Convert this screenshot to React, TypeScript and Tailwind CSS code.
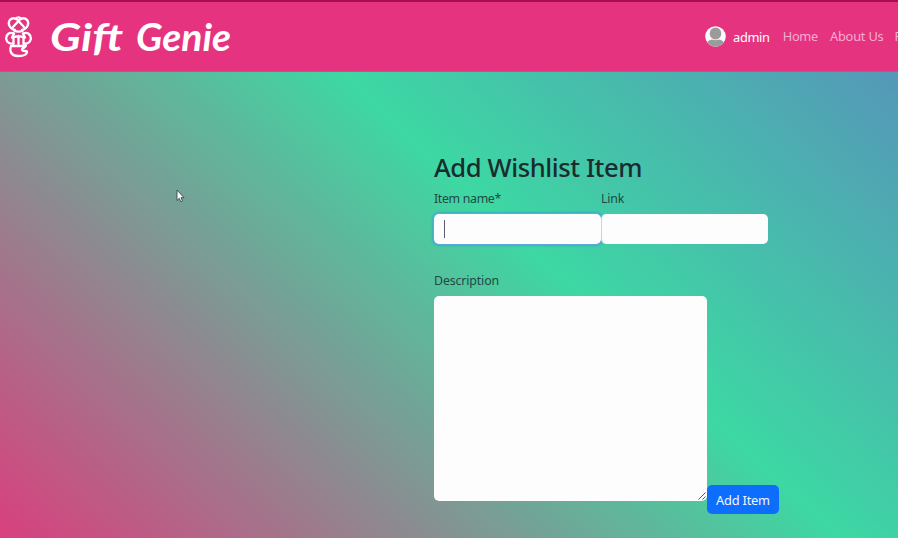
function GenieLogo() {
  return (
    <svg className="h-[42px] w-7 shrink-0" viewBox="0 0 28 42" fill="none" stroke="#fff" strokeWidth="2.3" strokeLinecap="round" strokeLinejoin="round">
      <path d="M10 14C5 13 2.500 8 4.500 4.500c2-3 5.500-3 9 0 3.500-3 7-3 9 0 2 3.500-.5 8.500-5.500 9.500" />
      <path d="M13.500 5L8 11M13.500 5l5.500 6M9 14.500c3 1.500 6 1.500 9 0M11 2.500c1-1.500 4-1.500 5 0" />
      <path d="M9 17.500C4 15.500.8 19 1.200 23c.5 3 3.300 5 6.800 4.500M18 17.500c5-2 8.200 1.500 7.800 5.500-.5 3-3.300 5-6.800 4.500" />
      <path d="M9 17.500l-2 4M18 17.500l2 4M8.500 22v6M13.500 20v8M18.500 22v6M9 21c3-1 6-1 9 0" />
      <path d="M6 30c-2 6 1 10 7 10 5 0 9-1 9-4 0-2-4 0-5-2-1-2 4-2 4-4.500M7 30h12" />
    </svg>
  );
}

function Avatar() {
  return (
    <svg className="size-[21px] shrink-0" viewBox="0 0 21 21">
      <defs>
        <clipPath id="avatar-circle"><circle cx="10.500" cy="10.500" r="10.300" /></clipPath>
      </defs>
      <g clipPath="url(#avatar-circle)">
        <rect width="21" height="21" fill="#fbfafb" />
        <ellipse cx="10.500" cy="7.500" rx="5.800" ry="6" fill="#9b9b9b" />
        <path d="M1 21c0-5 3-7 6-7.500 2 1 5 1 7 0 3 .5 6 2.500 6 7.500z" fill="#9b9b9b" />
      </g>
    </svg>
  );
}

function Pointer() {
  return (
    <svg className="pointer-events-none absolute left-[176px] top-[189px] h-[14px] w-[9px]" viewBox="0 0 9 14">
      <path d="M1 1v10.500l2.300-2.200 1.500 3.500 1.700-.8-1.500-3.300H8z" fill="#fff" stroke="#37474a" strokeWidth=".9" />
    </svg>
  );
}

export default function App() {
  return (
    <div className="relative flex h-[538px] w-[898px] flex-col overflow-hidden bg-[linear-gradient(43deg,#d9407e_0%,#3dd8a3_57%,#5597b8_95%)] font-['Noto_Sans',sans-serif] text-[12.8px] text-[#1f4a44]">
      <header className="flex h-[72px] shrink-0 items-center border-b border-[#a4667f] border-t-2 border-t-[#a80f50] bg-[#e6337f] text-white">
        <div className="flex items-center pl-[5px]">
          <GenieLogo />
          <svg className="ml-[14px] h-[60px] w-[190px]" viewBox="0 0 190 60" fill="#fff">
            <g fontFamily="Lato, sans-serif" fontStyle="italic" fontWeight="700" fontSize="38">
              <text x="3" y="44" textLength="73" lengthAdjust="spacingAndGlyphs">Gift</text>
              <text x="89" y="44" textLength="95" lengthAdjust="spacingAndGlyphs">Genie</text>
            </g>
          </svg>
        </div>
        <nav className="ml-auto flex w-[193px] items-center overflow-hidden whitespace-nowrap text-[#f6add0]">
          <Avatar />
          <span className="ml-[7px] mt-[2px] tracking-[-0.3px] text-white">admin</span>
          <span className="ml-[13px] mt-px tracking-[-0.3px]">Home</span>
          <span className="ml-3 mt-px tracking-[-0.2px]">About Us</span>
          <span className="ml-[11px] mt-px">F</span>
        </nav>
      </header>
      <main className="ml-[434px] flex flex-col items-start pt-[78px]">
        <h2 className="h-[35px] whitespace-nowrap text-[25.6px] font-medium leading-[35px] tracking-[-0.42px] text-[#1b2c30]">Add Wishlist Item</h2>
        <div className="mt-1 flex">
          <label className="flex w-[167px] flex-col">
            <span className="h-[25px] text-[12.4px] leading-[20px] tracking-[-0.35px]">Item name*</span>
            <span className="flex h-[30px] items-center rounded-[5px] bg-[#fdfdfe] pl-[10px] shadow-[0_0_0_1px_#5aaed5,0_0_2px_2px_#3aadc5]">
              <span className="h-[18px] w-px bg-[#5b5b70]" />
            </span>
          </label>
          <label className="flex w-[167px] flex-col">
            <span className="h-[25px] text-[12.4px] leading-[20px] tracking-[-0.2px]">Link</span>
            <span className="z-10 h-[30px] rounded-[5px] border-l border-[#c2d4f6] bg-[#fdfdfe]" />
          </label>
        </div>
        <span className="mt-[27px] h-[25px] text-[12.4px] leading-[20px] tracking-[-0.15px]">Description</span>
        <div className="flex items-end">
          <div className="flex h-[205px] w-[273px] items-end justify-end rounded-[5px] bg-[#fdfdfd] p-px">
            <svg className="size-[8px]" viewBox="0 0 8 8" stroke="#555" strokeWidth="1">
              <path d="M0.500 7.500l7-7M4.500 7.500l3-3" />
            </svg>
          </div>
          <button className="-mb-[13px] h-[29px] w-[72px] whitespace-nowrap rounded-[5px] bg-[#0d6efd] pt-[2px] tracking-[-0.2px] text-[#f2f7ff]">Add Item</button>
        </div>
      </main>
      <Pointer />
    </div>
  );
}
